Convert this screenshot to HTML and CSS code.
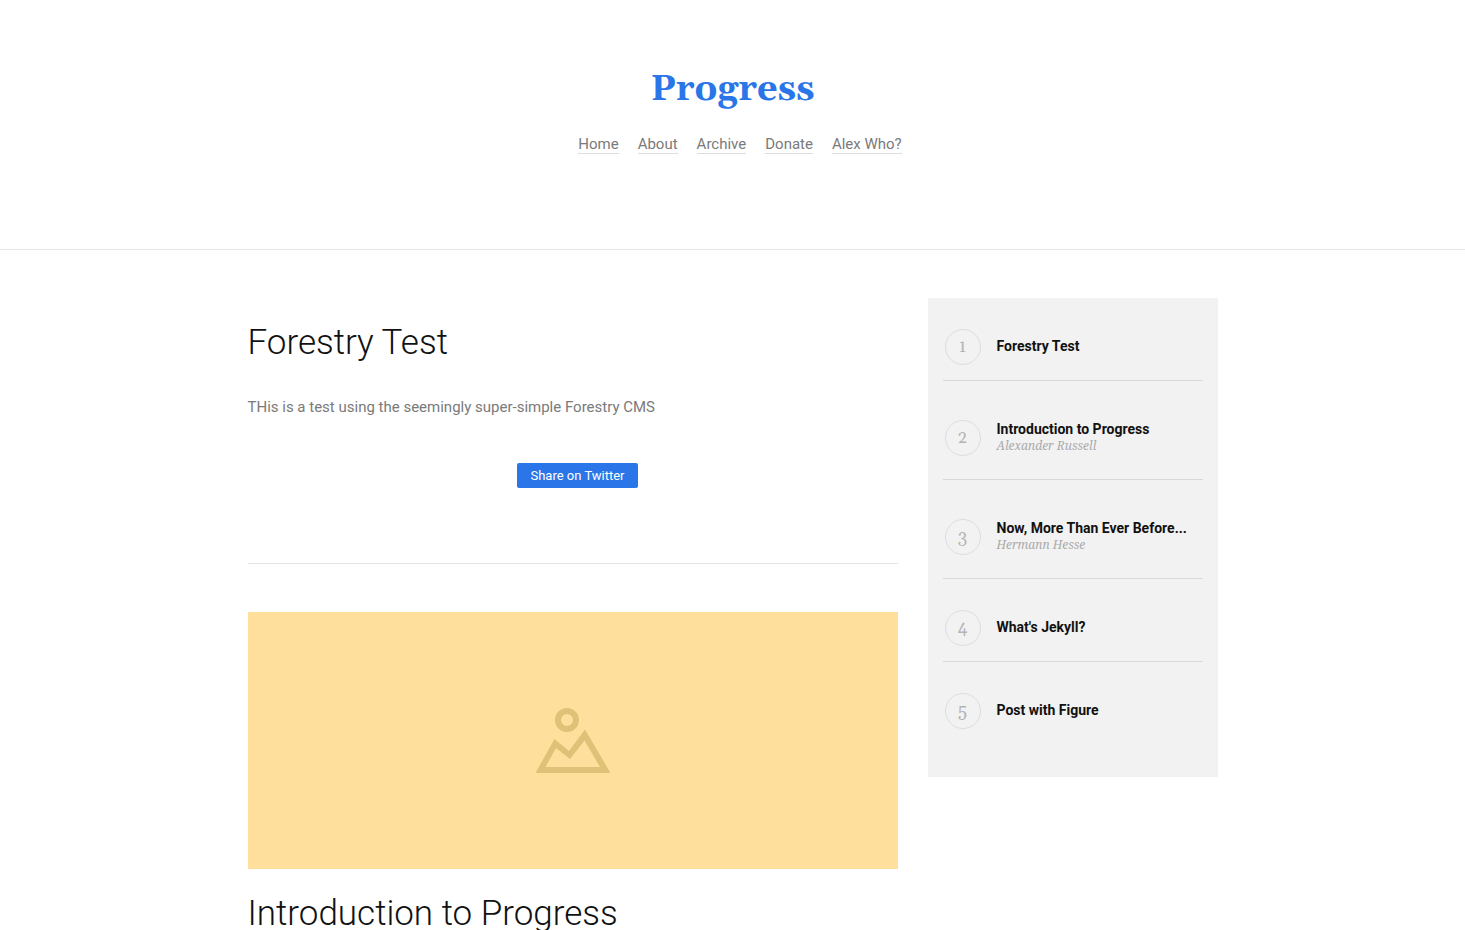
FILE: index.html
```
<!DOCTYPE html>
<html lang="en">
<head>
<meta charset="utf-8">
<meta name="viewport" content="width=device-width, initial-scale=1">
<title>Progress</title>
<link rel="stylesheet" href="styles.css">
</head>
<body>
<header class="site-header">
  <h1 class="site-title">Progress</h1>
  <nav class="site-nav">
    <a href="#">Home</a>
    <a href="#">About</a>
    <a href="#">Archive</a>
    <a href="#">Donate</a>
    <a href="#">Alex Who?</a>
  </nav>
</header>
<div class="container">
  <main class="posts">
    <article class="post">
      <h2 class="post-title">Forestry Test</h2>
      <p class="post-text">THis is a test using the seemingly super-simple Forestry CMS</p>
      <div class="post-share"><button class="share" type="button">Share on Twitter</button></div>
    </article>
    <article class="post">
      <div class="post-image">
        <svg class="picture" viewBox="0 0 76 66" aria-hidden="true">
          <circle cx="32" cy="12" r="9" fill="none" stroke="#dfc178" stroke-width="6"/>
          <path fill="#dfc178" fill-rule="evenodd" d="M0.500 65 19.500 31 34 43 50 21.500 75.500 65ZM10.500 59H65L49.500 32.500 35 51 21 40Z"/>
        </svg>
      </div>
      <h2 class="post-title">Introduction to Progress</h2>
    </article>
  </main>
  <aside class="sidebar">
    <ol class="recent">
      <li class="recent-item"><span class="number">1</span><div class="entry"><a class="recent-link" href="#">Forestry Test</a></div></li>
      <li class="recent-item with-author"><span class="number">2</span><div class="entry"><a class="recent-link" href="#">Introduction to Progress</a><p class="author">Alexander Russell</p></div></li>
      <li class="recent-item with-author"><span class="number">3</span><div class="entry"><a class="recent-link" href="#">Now, More Than Ever Before...</a><p class="author">Hermann Hesse</p></div></li>
      <li class="recent-item"><span class="number">4</span><div class="entry"><a class="recent-link" href="#">What's Jekyll?</a></div></li>
      <li class="recent-item"><span class="number">5</span><div class="entry"><a class="recent-link" href="#">Post with Figure</a></div></li>
    </ol>
  </aside>
</div>
</body>
</html>
```
FILE: styles.css
```
* { box-sizing: border-box; }
body {
  margin: 0;
  background: #fff;
  color: #7a7a7a;
  font-family: Roboto, sans-serif;
  font-size: 15px;
  line-height: 24px;
}
h1, h2, p, ol { margin: 0; padding: 0; }
a { text-decoration: none; }
.site-header {
  display: flex;
  flex-direction: column;
  align-items: center;
  gap: 21px;
  padding: 66px 0 95px;
  border-bottom: 1px solid #e5e5e5;
}
.site-title {
  color: #2a76e8;
  font-family: Georgia, Gelasio, "DejaVu Serif", serif;
  font-size: 36px;
  line-height: 48px;
}
.site-nav {
  display: flex;
  flex-wrap: wrap;
  gap: 19px;
  padding-left: 15px;
}
.site-nav a {
  border-bottom: 1px solid #ddd;
  color: #7a7a7a;
  line-height: 18px;
}
.container {
  display: flex;
  align-items: flex-start;
  gap: 30px;
  max-width: 1000px;
  margin: 0 auto;
  padding: 48px 15px;
}
.posts { flex: 1; min-width: 0; }
.post + .post { margin-top: 48px; }
.post:first-child {
  padding: 21px 0 72px;
  border-bottom: 1px solid #e5e5e5;
}
.post-title {
  color: #111;
  font-size: 35px;
  font-weight: 300;
  line-height: 48px;
}
.post-text { padding-top: 28px; }
.post-share {
  display: flex;
  justify-content: center;
  padding: 44px 0 3px 10px;
}
.share {
  padding: 0 13px;
  border: 0;
  border-radius: 2px;
  background: #2a76e8;
  color: #fff;
  font: 13px/25px Roboto, sans-serif;
}
.post-image {
  display: grid;
  place-items: center;
  height: 257px;
  margin-bottom: 21px;
  background: #fedf9b;
}
.picture { width: 76px; height: 66px; }
.sidebar {
  width: 290px;
  padding: 0 15px 33px;
  background: #f2f2f2;
}
.recent { list-style: none; }
.recent-item {
  display: flex;
  align-items: center;
  gap: 16px;
  padding: 31px 2px 15px;
  border-bottom: 1px solid #d8d8d8;
}
.recent-item.with-author { padding: 39px 2px 23px; }
.recent-item:last-child { border-bottom: 0; }
.number {
  flex: none;
  width: 36px;
  border: 1px solid #ddd;
  border-radius: 50%;
  color: #b4b4b4;
  font-family: Georgia, Gelasio, "Noto Serif", serif;
  font-size: 17px;
  line-height: 34px;
  text-align: center;
}
.entry { padding-bottom: 2px; }
.recent-link {
  display: block;
  color: #111;
  font-size: 14px;
  font-weight: 700;
  line-height: 18px;
}
.author {
  color: #aaa;
  font-family: "Noto Serif", "Liberation Serif", serif;
  font-size: 12px;
  font-style: italic;
  line-height: 16px;
}
```
